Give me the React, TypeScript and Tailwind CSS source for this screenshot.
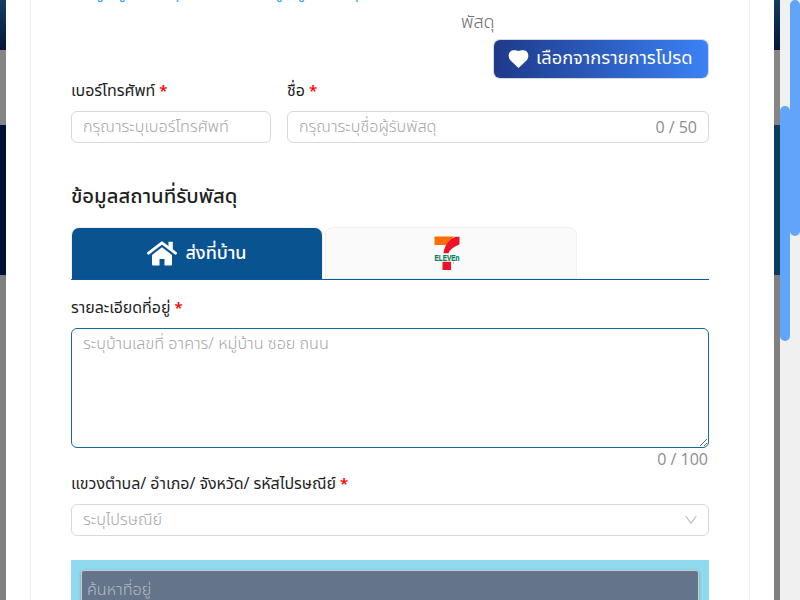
import React from "react";

const Star = () => <span className="relative -top-px ml-[4px] inline-block h-[18px] align-top font-['Noto_Sans'] text-[15px] font-semibold leading-[22px] text-[#ff0000]">*</span>;

function Label({ children, className = "" }: { children: React.ReactNode; className?: string }) {
  return (
    <div className={`h-[22px] whitespace-nowrap text-[16px] leading-[20px] text-[#1f1f1f] ${className}`}>
      <span className="tracking-[-0.04px]">{children}</span>
      <Star />
    </div>
  );
}

const field = "flex h-8 items-center rounded-md border border-[#d9d9d9] bg-white px-[11px] text-[16px] leading-[22px]";
const hint = "font-['Noto_Sans_Thai',sans-serif] text-[16.2px] font-light whitespace-nowrap";

function SevenEleven() {
  return (
    <svg width="27" height="36" viewBox="0 0 27 36" className="block">
      <path d="M.5 1.500H20.500C16.500 4 14 6.500 12.500 10H.5Z" fill="#ff6c00" />
      <path d="M25.500 1.800V9.500C20 11.500 16 14.500 14.500 18.200H9.500C10.500 10.500 14.500 4.500 21.500 1.800Z" fill="#ee1128" />
      <path d="M8.500 26.800H17V35H8.500Z" fill="#ee1128" />
      <text x="0.500" y="25.600" fontFamily="Liberation Sans, sans-serif" fontWeight="700" fontSize="8.500" textLength="25" lengthAdjust="spacingAndGlyphs" fill="#087c54" stroke="#087c54" strokeWidth=".2">ELEVEn</text>
      <circle cx="19.500" cy="28" r="0.700" fill="#7fb59f" />
    </svg>
  );
}

export default function App() {
  return (
    <div className="relative flex h-[600px] w-[800px] overflow-hidden bg-white font-['Noto_Sans','Noto_Sans_Thai',sans-serif]">
      <div className="flex w-[6px] shrink-0 flex-col">
        <div className="h-[50px] bg-linear-to-b from-[#123f60] to-[#07153b]" />
        <div className="h-[75px] bg-[#858585]" />
        <div className="h-[150px] bg-[#001033]" />
        <div className="flex-1 bg-[#808080]" />
      </div>

      <main className="h-[600px] w-[768px] shrink-0 overflow-hidden bg-white px-6">
        <div className="h-[620px] border-x border-[#f0f0f0] px-10">
          <div className="relative h-[40px]">
            <div className="absolute -top-[24px] left-[2px] whitespace-nowrap text-[18px] leading-[28px] text-[#40a9ff]">ข้อมูลผู้รับพัสดุ แสดงรายข้อมูลผู้รับพัสดุ</div>
            <div className="absolute left-[390px] top-[12px] whitespace-nowrap font-['Noto_Sans_Thai',sans-serif] text-[18px] font-light leading-[22px] text-[#707070]">พัสดุ</div>
          </div>
          <div className="flex justify-end">
            <button className="mr-px flex h-[38px] w-[214px] items-center whitespace-nowrap rounded-md bg-linear-to-r from-[#1e3a8a] to-[#3b82f6] pl-[14px] text-[18.300px] font-normal leading-[28px] text-white shadow-[0_0_0_1px_#d9d9d9]">
              <svg width="21" height="18" viewBox="0 0 21 18" className="-mt-px mr-[7px] shrink-0">
                <path d="M10.500 18 2.500 10.400C-.500 7 .300 2 4 .600 6.500-.200 9 .500 10.500 1 12 .500 14.500-.200 17 .600 20.700 2 21.500 7 18.500 10.400Z" fill="white" />
              </svg>
              <span className="-mt-px font-['Noto_Sans_Thai',sans-serif]">เลือกจากรายการโปรด</span>
            </button>
          </div>

          <div className="mt-[2px] flex gap-4">
            <div className="w-[200px]">
              <Label>เบอร์โทรศัพท์</Label>
              <div className={`mt-[9px] text-[#a6a6a6] ${field}`}><span className={hint}>กรุณาระบุเบอร์โทรศัพท์</span></div>
            </div>
            <div className="w-[422px]">
              <Label>ชื่อ</Label>
              <div className={`mt-[9px] justify-between text-[#a6a6a6] ${field}`}>
                <span className={hint}>กรุณาระบุชื่อผู้รับพัสดุ</span>
                <span className="font-['Open_Sans'] text-[#8c8c8c]">0 / 50</span>
              </div>
            </div>
          </div>

          <h2 className="mt-[38px] h-[28px] whitespace-nowrap text-[20.300px] font-medium leading-[28px] text-[#1f1f1f]">ข้อมูลสถานที่รับพัสดุ</h2>

          <div className="mt-[18px] flex h-[53px] gap-[2px] border-b border-[#08589c]">
            <div className="flex w-[252px] items-center justify-center gap-[8px] rounded-t-lg border border-b-0 border-[#f0f0f0] bg-[#0a5391] text-[18px] font-medium text-white">
              <svg width="30" height="25" viewBox="0 0 30 25">
                <path d="M1.500 12.200 15 1.800 28.500 12.200" fill="none" stroke="white" strokeWidth="2.800" strokeLinejoin="round" strokeLinecap="round" />
                <path d="M21.500 .800h4.300v9.500l-4.300-3.300zM15 6.200 25 14V23.500a1 1 0 0 1-1 1H17.500V18H12.500V24.500H6a1 1 0 0 1-1-1V14Z" fill="white" />
              </svg>
              <span className="-mt-[2px] whitespace-nowrap">ส่งที่บ้าน</span>
            </div>
            <div className="flex w-[252px] justify-center rounded-t-lg border border-[#f0f0f0] bg-[#fafafa] pr-[8px] pt-[7px]">
              <SevenEleven />
            </div>
          </div>

          <Label className="mt-[17px]">รายละเอียดที่อยู่</Label>
          <textarea
            placeholder="ระบุบ้านเลขที่ อาคาร/ หมู่บ้าน ซอย ถนน"
            className="mt-[9px] block h-[120px] w-full resize-y rounded-md border border-[#17689c] bg-white px-[11px] py-[4px] font-['Noto_Sans_Thai','Noto_Sans',sans-serif] text-[16.200px] font-light leading-[22px] outline-none placeholder:text-[#a6a6a6]"
          />
          <div className="pr-px text-right font-['Open_Sans'] text-[16px] leading-[22px] text-[#8c8c8c]">0 / 100</div>
          <Label className="mt-[3px]">แขวงตำบล/ อำเภอ/ จังหวัด/ รหัสไปรษณีย์</Label>
          <div className={`mt-[9px] justify-between text-[#a6a6a6] ${field}`}>
            <span className={hint}>ระบุไปรษณีย์</span>
            <svg width="12" height="10" viewBox="0 0 12 10" className="block">
              <path d="M.700 1 6 8.200 11.300 1" fill="none" stroke="#bfbfbf" strokeWidth="1.200" />
            </svg>
          </div>
          <div className="mt-[24px] h-[60px] bg-[#8fdaee] px-[10px] pt-[10px]">
            <div className="h-[50px] rounded-[3px] border border-[#cccccc] bg-[#64748b] px-[5px] pt-[7px] text-[16px] leading-[22px] text-[#b4bac4] shadow-[0_1px_3px_rgba(0,0,0,0.3)]"><span className={hint}>ค้นหาที่อยู่</span></div>
          </div>
        </div>
      </main>

      <div className="flex w-[6px] shrink-0 flex-col">
        <div className="h-[50px] bg-linear-to-b from-[#0e3d5f] to-[#07153b]" />
        <div className="h-[75px] bg-[#858585]" />
        <div className="h-[150px] bg-[#0b3c5d]" />
        <div className="flex-1 bg-[#808080]" />
      </div>
      <div className="w-[10px] shrink-0 bg-[#f0f0f0] pt-[106px]">
        <div className="h-[235px] rounded-full bg-[#60a5fa]" />
      </div>
      <div className="w-[10px] shrink-0 bg-[#f0f0f0]">
        <div className="h-[236px] rounded-full bg-[#60a5fa]" />
      </div>
    </div>
  );
}
